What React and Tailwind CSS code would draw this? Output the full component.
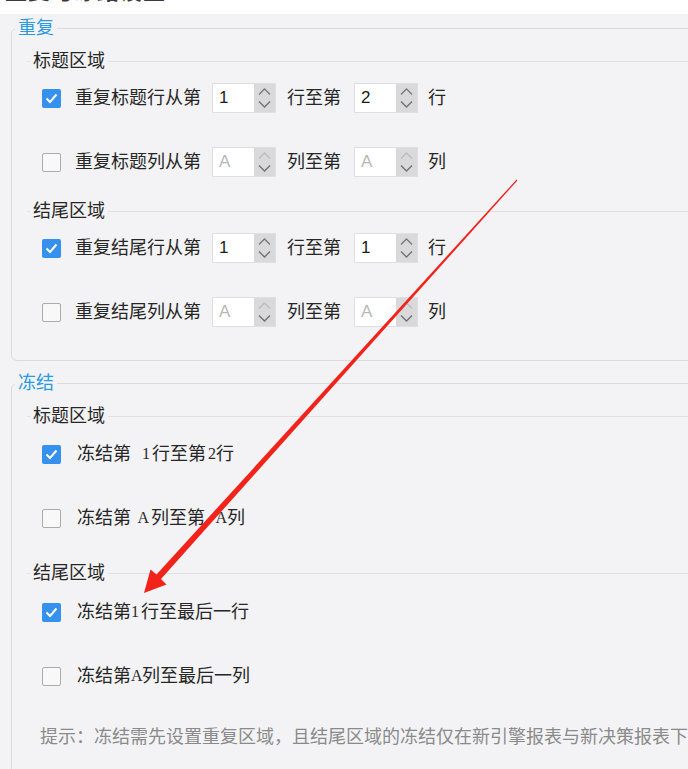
import React from "react";

const FONT = "font-['Liberation_Sans','Noto_Sans_CJK_SC',sans-serif]";

const Checkbox = ({ checked }) =>
  checked ? (
    <span className="flex h-[19px] w-[19px] shrink-0 items-center justify-center rounded-[2px] bg-[#3590ee]">
      <svg width="13" height="11" viewBox="0 0 13 11">
        <path d="M1.5 5.5 L5 9 L11.5 1.5" fill="none" stroke="#fff" strokeWidth="2" />
      </svg>
    </span>
  ) : (
    <span className="h-[19px] w-[19px] shrink-0 rounded-[2px] border border-[#ababab] bg-[#f8f8f9]" />
  );

const Spin = ({ value, placeholder }) => (
  <div className="flex h-[30px] w-[64px] shrink-0 border border-[#dfdfe2] bg-white">
    <div className="flex flex-1 items-center pl-[6px] text-[17px]">
      {value ? (
        <span className="text-[#1c1c1c]">{value}</span>
      ) : (
        <span className="text-[#b8b8b8]">{placeholder}</span>
      )}
    </div>
    <div className="flex w-[21px] flex-col items-center justify-center gap-[6px] bg-[#d9d9dc]">
      <svg width="13" height="7" viewBox="0 0 13 7">
        <path d="M1 6.5 L6.5 1 L12 6.5" fill="none" stroke={value ? "#7a7a7a" : "#bcbcbc"} strokeWidth="1.3" />
      </svg>
      <svg width="13" height="7" viewBox="0 0 13 7">
        <path d="M1 0.5 L6.5 6 L12 0.5" fill="none" stroke="#707070" strokeWidth="1.3" />
      </svg>
    </div>
  </div>
);

const GroupHeader = ({ title, className }) => (
  <div className={`flex h-[26px] items-center ${className}`}>
    <span className="h-px w-[3px] bg-[#e1e1e4]" />
    <span className="px-[3px] text-[18px] leading-[26px] text-[#262626]">{title}</span>
    <span className="h-px flex-1 bg-[#e1e1e4]" />
  </div>
);

const RepeatRow = ({ checked, label, a, b, unit, placeholder, className }) => (
  <div className={`flex h-[30px] items-center pl-[15px] text-[18px] text-[#262626] ${className}`}>
    <Checkbox checked={checked} />
    <span className="ml-[14px]">{label}</span>
    <span className="ml-[11px]">
      <Spin value={a} placeholder={placeholder} />
    </span>
    <span className="ml-[11px]">{unit}至第</span>
    <span className="ml-[13px]">
      <Spin value={b} placeholder={placeholder} />
    </span>
    <span className="ml-[10px]">{unit}</span>
  </div>
);

const FreezeRow = ({ checked, children, className }) => (
  <div className={`flex h-[30px] items-center pl-[15px] text-[18px] text-[#262626] ${className}`}>
    <Checkbox checked={checked} />
    <span className="ml-[16px] flex items-center whitespace-nowrap">{children}</span>
  </div>
);

const Num = ({ w, children }) => (
  <span className={`inline-block text-right font-['Liberation_Serif',serif] text-[16px] text-[#2a2a2a] ${w}`}>
    {children}
  </span>
);

export default function App() {
  return (
    <div className={`relative h-[769px] w-[688px] overflow-hidden bg-[#f3f3f5] ${FONT}`}>
      <div className="h-[14px] overflow-hidden bg-white pl-[5px]">
        <div className="-mt-[21px] text-[22px] font-bold leading-[26px] tracking-[1px] text-[#3a3a3a]">
          重复与冻结设置
        </div>
      </div>

      <div className="pl-[11px] pt-[1px]">
        <fieldset className="w-[720px] rounded-[6px] border border-[#dcdcdf] pb-[33px]">
          <legend className="ml-[3px] px-[3px] text-[18px] leading-[26px] text-[#2b9be0]">重复</legend>
          <div className="pl-[15px]">
            <GroupHeader title="标题区域" className="mt-[7px]" />
            <RepeatRow checked label="重复标题行从第" a="1" b="2" unit="行" className="mt-[9px]" />
            <RepeatRow label="重复标题列从第" unit="列" placeholder="A" className="mt-[34px]" />
            <GroupHeader title="结尾区域" className="mt-[21px]" />
            <RepeatRow checked label="重复结尾行从第" a="1" b="1" unit="行" className="mt-[9px]" />
            <RepeatRow label="重复结尾列从第" unit="列" placeholder="A" className="mt-[34px]" />
          </div>
        </fieldset>

        <fieldset className="mt-[9px] h-[420px] w-[720px] rounded-[6px] border border-[#dcdcdf]">
          <legend className="ml-[3px] px-[3px] text-[18px] leading-[26px] text-[#2b9be0]">冻结</legend>
          <div className="pl-[15px]">
            <GroupHeader title="标题区域" className="mt-[7px]" />
            <FreezeRow checked className="mt-[10px]">
              冻结第<Num w="w-[19px]">1</Num>
              <span className="ml-[2px]">行至第</span>
              <Num w="w-[10px]">2</Num>行
            </FreezeRow>
            <FreezeRow className="mt-[34px]">
              冻结第<Num w="w-[18px]">A</Num>
              <span className="ml-[2px]">列至第</span>
              <Num w="w-[22px]">A</Num>列
            </FreezeRow>
            <GroupHeader title="结尾区域" className="mt-[27px]" />
            <FreezeRow checked className="mt-[11px]">
              冻结第<Num w="w-[8px]">1</Num>
              <span className="ml-[2px]">行至最后一行</span>
            </FreezeRow>
            <FreezeRow className="mt-[34px]">
              冻结第<Num w="w-[9px]">A</Num>
              <span className="ml-[2px]">列至最后一列</span>
            </FreezeRow>
            <div className="ml-[13px] mt-[33px] whitespace-nowrap text-[18px] leading-[26px] text-[#8a8a8a]">
              提示：冻结需先设置重复区域，且结尾区域的冻结仅在新引擎报表与新决策报表下生效
            </div>
          </div>
        </fieldset>
      </div>

      {/* annotation arrow */}
      <svg className="pointer-events-none absolute inset-0" width="688" height="769">
        <polygon
          points="144,593 166.5,584.5 161,579 517.4,180.4 516.6,179.6 156.5,574.5 150.5,569.5"
          fill="#f2231b"
        />
      </svg>
    </div>
  );
}
